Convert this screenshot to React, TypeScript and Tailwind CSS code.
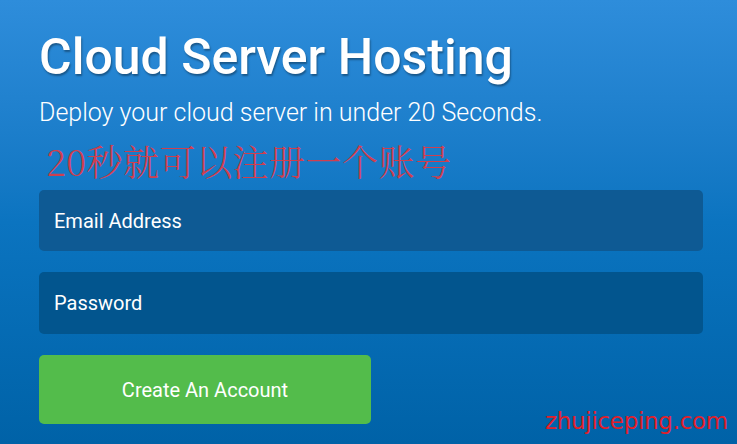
export default function App() {
  return (
    <div className="relative h-[444px] w-[737px] overflow-hidden bg-gradient-to-b from-[#2e8ddb] via-[#0b74c0] to-[#0062a7] font-['Roboto',sans-serif]">
      <div className="flex flex-col pl-[39px] pr-[34px] pt-[29px]">
        <h1 className="text-[50px] font-medium leading-[56px] text-white [text-shadow:1px_2px_2px_rgba(0,0,0,0.35)]">
          Cloud Server Hosting
        </h1>
        <p className="mt-[14px] text-[25px] font-light leading-[28px] text-white">
          Deploy your cloud server in under 20 Seconds.
        </p>
        <p className="ml-[7px] mt-[15px] font-['Noto_Serif_CJK_SC','Noto_Sans_CJK_SC',serif] text-[36px] font-light leading-[38px] tracking-[0.5px] text-[#cf3f4f]">
          20秒就可以注册一个账号
        </p>

        <div className="mt-[10px] flex flex-col gap-[21px]">
          <div className="flex h-[61px] items-center rounded-[5px] bg-[#0e5a94] pl-[15px] text-[20px] text-white">
            Email Address
          </div>
          <div className="flex h-[62px] items-center rounded-[5px] bg-[#02558e] pl-[15px] text-[20px] text-white">
            Password
          </div>
          <button className="flex h-[69px] w-[332px] items-center justify-center rounded-[5px] bg-[#53bc4b] text-[20px] text-white">
            Create An Account
          </button>
        </div>
      </div>

      <span className="absolute left-[545px] top-[404px] font-['Comic_Sans_MS','DejaVu_Sans',sans-serif] text-[23px] tracking-[-0.3px] text-[#e1202a]">
        zhujiceping.com
      </span>
    </div>
  );
}
